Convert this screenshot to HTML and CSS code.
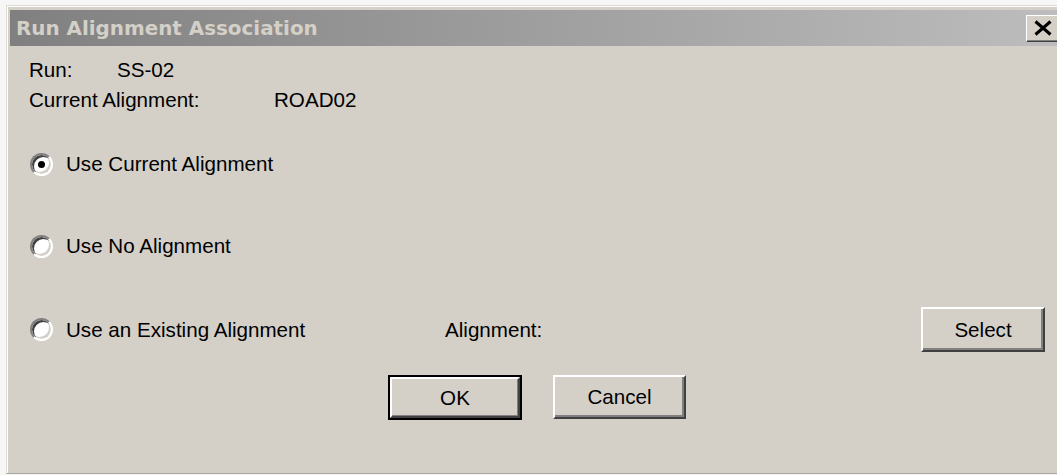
FILE: index.html
```html
<!DOCTYPE html>
<html lang="en">
<head>
<meta charset="utf-8">
<title>Run Alignment Association</title>
<link rel="stylesheet" href="styles.css">
</head>
<body>
<div class="window">
  <div class="titlebar">
    <span class="title">Run Alignment Association</span>
    <button class="close" type="button" aria-label="Close">
      <svg width="20" height="16" viewBox="0 0 20 16">
        <path d="M2.5 1.5 L17.5 14.5 M17.5 1.5 L2.5 14.5" stroke="#000" stroke-width="3" fill="none"/>
      </svg>
    </button>
  </div>
  <div class="content">
    <div class="info-row">
      <span class="info-label info-label--run">Run:</span>
      <span class="info-value">SS-02</span>
    </div>
    <div class="info-row">
      <span class="info-label info-label--current">Current Alignment:</span>
      <span class="info-value">ROAD02</span>
    </div>

    <label class="radio-row radio-row--first">
      <span class="radio radio--checked"></span>
      <span class="radio-text">Use Current Alignment</span>
    </label>
    <label class="radio-row radio-row--second">
      <span class="radio"></span>
      <span class="radio-text">Use No Alignment</span>
    </label>
    <div class="radio-row radio-row--third">
      <label class="radio-option">
        <span class="radio"></span>
        <span class="radio-text">Use an Existing Alignment</span>
      </label>
      <span class="align-label">Alignment:</span>
      <button class="btn btn--select" type="button">Select</button>
    </div>

    <div class="actions">
      <button class="btn btn--default" type="button"><span class="btn-face">OK</span></button>
      <button class="btn btn--cancel" type="button">Cancel</button>
    </div>
  </div>
</div>
</body>
</html>
```
FILE: styles.css
```css
html, body {
  margin: 0;
  padding: 0;
  overflow: hidden;
}

body {
  background: #f6f6f6;
  width: 1057px;
  height: 475px;
  font-family: "Liberation Sans", Arial, sans-serif;
  font-size: 20.6px;
  color: #000;
}

.window {
  box-sizing: border-box;
  margin: 5px 0 0 6px;
  width: 1062px;
  height: 469px;
  background: #d4d0c8;
  border-top: 1px solid #dedbd4;
  border-left: 1px solid #dedbd4;
  border-bottom: 1px solid #a8a59f;
  border-right: 1px solid #404040;
  box-shadow: inset 1px 1px 0 #ffffff;
  padding: 4px 3px 0 3px;
  display: flex;
  flex-direction: column;
}

/* caption bar (inactive gradient) */
.titlebar {
  height: 36px;
  display: flex;
  align-items: center;
  justify-content: space-between;
  padding: 0 0 0 6px;
  background: linear-gradient(to right, #808080, #bdbdbd);
}

.title {
  font-family: "DejaVu Sans", Verdana, sans-serif;
  font-weight: bold;
  font-size: 19.9px;
  color: #d4d0c8;
}

.close {
  box-sizing: border-box;
  width: 34px;
  height: 27px;
  margin-right: 4px;
  padding: 0 0 1px 0;
  display: flex;
  align-items: center;
  justify-content: center;
  background: #d4d0c8;
  border: 1px solid;
  border-color: #ffffff #404040 #404040 #ffffff;
  box-shadow: inset -1px -1px 0 #808080;
}

.content {
  display: flex;
  flex-direction: column;
  padding: 9px 19px 0 19px;
}

.info-row {
  height: 30px;
  display: flex;
  align-items: center;
}

.info-label--run { width: 88px; }
.info-label--current { width: 245px; }

.radio-row {
  height: 30px;
  display: flex;
  align-items: center;
}

.radio-row--first { margin-top: 34px; }
.radio-row--second { margin-top: 52px; }
.radio-row--third {
  height: 45px;
  margin-top: 46px;
}

.radio-option {
  width: 416px;
  display: flex;
  align-items: center;
}

.radio {
  box-sizing: border-box;
  flex: none;
  width: 23px;
  height: 23px;
  margin-left: 1px;
  margin-right: 13px;
  border-radius: 50%;
  background: #ffffff;
  border: 2px solid;
  border-color: #808080 #ffffff #ffffff #808080;
  box-shadow: inset 2px 2px 0 #404040, inset -2px -2px 0 #d4d0c8;
  display: flex;
  align-items: center;
  justify-content: center;
}

.radio--checked::after {
  content: "";
  width: 7px;
  height: 7px;
  border-radius: 50%;
  background: #000;
}

.align-label {
  flex: none;
}

.btn {
  box-sizing: border-box;
  font-family: "Liberation Sans", Arial, sans-serif;
  font-size: 20.6px;
  color: #000;
  background: #d4d0c8;
  padding: 0;
  border: 2px solid;
  border-color: #ffffff #404040 #404040 #ffffff;
  box-shadow: inset -2px -2px 0 #808080;
  display: flex;
  align-items: center;
  justify-content: center;
}

.btn--select {
  width: 124px;
  height: 45px;
  margin-left: auto;
}

.actions {
  display: flex;
  margin-top: 23px;
  padding-left: 359px;
  gap: 31px;
}

.btn--default {
  width: 134px;
  height: 45px;
  border: 2px solid #000;
  box-shadow: none;
}

.btn-face {
  box-sizing: border-box;
  width: 100%;
  height: 100%;
  display: flex;
  align-items: center;
  justify-content: center;
  border: 2px solid;
  border-color: #ffffff #404040 #404040 #ffffff;
  box-shadow: inset -1px -1px 0 #808080;
}

.btn--cancel {
  width: 133px;
  height: 44px;
}
```
